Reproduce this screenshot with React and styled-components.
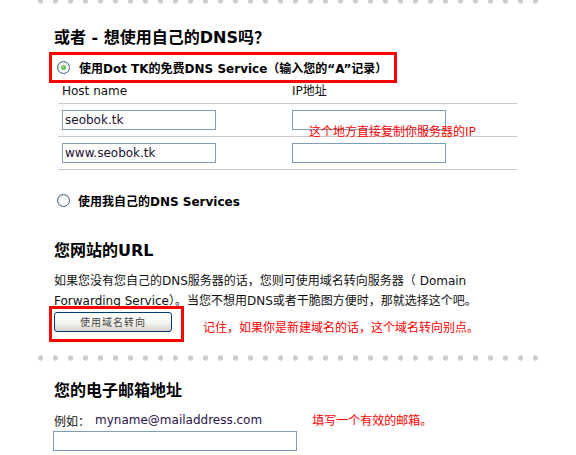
import React from 'react';
import styled, { createGlobalStyle } from 'styled-components';

const GlobalStyle = createGlobalStyle`
  html, body {
    margin: 0;
    padding: 0;
    background: #fff;
  }
  body {
    font-family: "DejaVu Sans", "Noto Sans CJK SC", sans-serif;
    font-size: 12px;
    color: #111;
  }
`;

const Page = styled.div`
  width: 576px;
  height: 455px;
  overflow: hidden;
`;

const Dots = styled.div`
  width: 510px;
  height: 6px;
  margin-left: 33px;
  margin-top: ${p => p.$top || 0}px;
  background-image: radial-gradient(circle at center, #cdcdcd 2.4px, transparent 2.9px);
  background-size: 15px 6px;
  background-repeat: repeat-x;
`;

const Section = styled.div`
  padding-left: 54px;
`;

const Heading = styled.h2`
  margin: ${p => p.$top || 0}px 0 0;
  font-size: 16px;
  line-height: 20px;
  font-weight: bold;
  color: #000;
`;

const ChoiceBox = styled.div`
  box-sizing: border-box;
  width: 348px;
  height: 31px;
  margin: 4px 0 0 -5px;
  border: 3px solid #f00;
  padding-left: 5px;
  display: flex;
  align-items: center;
`;

const ChoiceRow = styled.div`
  display: flex;
  align-items: center;
  height: 16px;
  margin: 22px 0 0 3px;
`;

const Radio = styled.span`
  box-sizing: border-box;
  width: 13px;
  height: 13px;
  border-radius: 50%;
  border: 1px solid #3b618e;
  background: radial-gradient(circle at 60% 60%, #fff 30%, #d8d8d0 100%);
  display: flex;
  align-items: center;
  justify-content: center;
  flex-shrink: 0;
  &::after {
    content: '';
    width: 5px;
    height: 5px;
    border-radius: 50%;
    background: ${p => (p.$checked ? 'radial-gradient(circle at 40% 40%, #9fe08a, #2f9a22)' : 'transparent')};
  }
`;

const ChoiceLabel = styled.span`
  font-weight: bold;
  margin-left: ${p => p.$gap || 9}px;
  color: #000;
  white-space: nowrap;
`;

const Table = styled.div`
  width: 459px;
  margin-left: 4px;
`;

const Row = styled.div`
  display: grid;
  grid-template-columns: 230px 229px;
  height: ${p => (p.$header ? 20 : 32)}px;
  border-bottom: 1px solid #c9c9c9;
`;

const Cell = styled.div`
  position: relative;
  padding: ${p => (p.$header ? 0 : 6)}px 0 0 4px;
  line-height: 16px;
  white-space: nowrap;
`;

const TextInput = styled.input`
  box-sizing: border-box;
  display: block;
  width: ${p => p.$width || 154}px;
  height: 20px;
  margin: ${p => p.$margin || 0};
  padding: 0 2px;
  border: 1px solid #7f9db9;
  font-family: "DejaVu Sans", "Noto Sans CJK SC", sans-serif;
  font-size: 12px;
  color: #1a1030;
  background: #fff;
  outline: none;
`;

const Note = styled.span`
  color: #f00;
  font-family: "Noto Sans CJK SC", sans-serif;
  font-size: 12px;
  line-height: 16px;
  white-space: nowrap;
  margin-left: ${p => p.$left || 0}px;
  margin-top: ${p => p.$top || 0}px;
`;

const OverNote = styled(Note)`
  position: absolute;
  left: 21px;
  top: 19px;
`;

const Para = styled.p`
  margin: 10px 0 0;
  line-height: 20px;
  white-space: nowrap;
`;

const ButtonRow = styled.div`
  display: flex;
  align-items: center;
  margin-top: -5px;
`;

const ButtonBox = styled.div`
  box-sizing: border-box;
  width: 135px;
  height: 36px;
  margin-left: -5px;
  border: 3px solid #f00;
  padding: 3px 0 0 2px;
`;

const XPButton = styled.button`
  display: block;
  width: 118px;
  height: 20px;
  padding: 0;
  border: 1px solid #003c74;
  border-radius: 3px;
  background: linear-gradient(#ffffff, #f4f4f0 55%, #d9d4c8);
  font-family: "Noto Sans CJK SC", sans-serif;
  font-size: 10px;
  line-height: 18px;
  color: #444;
  letter-spacing: 1px;
`;

const ExampleRow = styled.div`
  display: flex;
  align-items: center;
  height: 16px;
  margin-top: 11px;
  white-space: nowrap;
`;

const Sample = styled.span`
  margin-left: 5px;
  color: #2a1448;
`;

export default function App() {
  return (
    <Page>
      <GlobalStyle />
      <Dots $top={-2} />
      <Section>
        <Heading $top={24}>或者 - 想使用自己的DNS吗？</Heading>
        <ChoiceBox>
          <Radio $checked />
          <ChoiceLabel>使用Dot TK的免费DNS Service（输入您的“A”记录）</ChoiceLabel>
        </ChoiceBox>
        <Table>
          <Row $header>
            <Cell $header>Host name</Cell>
            <Cell $header>IP地址</Cell>
          </Row>
          <Row>
            <Cell><TextInput value="seobok.tk" readOnly /></Cell>
            <Cell>
              <TextInput value="" readOnly />
              <OverNote>这个地方直接复制你服务器的IP</OverNote>
            </Cell>
          </Row>
          <Row>
            <Cell><TextInput value="www.seobok.tk" readOnly /></Cell>
            <Cell><TextInput value="" readOnly /></Cell>
          </Row>
        </Table>
        <ChoiceRow>
          <Radio />
          <ChoiceLabel $gap={8}>使用我自己的DNS Services</ChoiceLabel>
        </ChoiceRow>
        <Heading $top={33}>您网站的URL</Heading>
        <Para>
          如果您没有您自己的DNS服务器的话，您则可使用域名转向服务器（ Domain<br />
          Forwarding Service）。当您不想用DNS或者干脆图方便时，那就选择这个吧。
        </Para>
        <ButtonRow>
          <ButtonBox>
            <XPButton type="button">使用域名转向</XPButton>
          </ButtonBox>
          <Note $left={19} $top={6}>记住，如果你是新建域名的话，这个域名转向别点。</Note>
        </ButtonRow>
      </Section>
      <Dots $top={13} />
      <Section>
        <Heading $top={20}>您的电子邮箱地址</Heading>
        <ExampleRow>
          <span>例如：</span>
          <Sample>myname@mailaddress.com</Sample>
          <Note $left={50}>填写一个有效的邮箱。</Note>
        </ExampleRow>
        <TextInput $width={244} $margin="3px 0 0 -1px" value="" readOnly />
      </Section>
    </Page>
  );
}
